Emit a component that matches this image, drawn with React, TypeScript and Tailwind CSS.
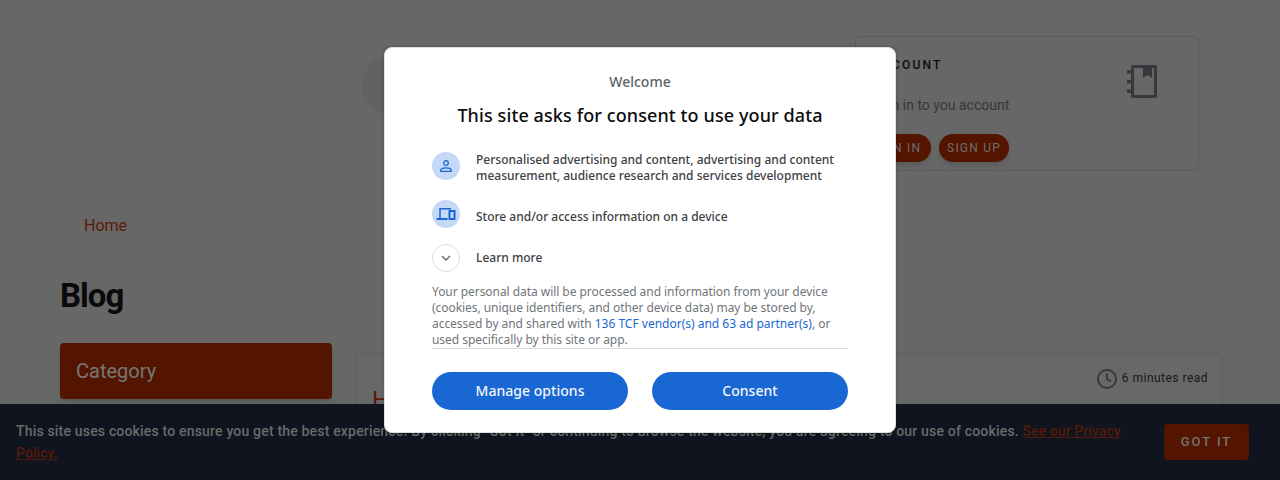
import React from "react";

const roboto = { fontFamily: "Roboto, sans-serif" };

function Notebook() {
  return (
    <svg width="32" height="34" viewBox="0 0 32 34" className="text-[#37383e]">
      <path fill="currentColor" fillRule="evenodd" d="M6 0h22a2 2 0 0 1 2 2v29a2 2 0 0 1-2 2H6a2 2 0 0 1-2-2V2a2 2 0 0 1 2-2zm1 3v27h20V3h-2v10l-4.5-3-4.5 3V3H7z" />
      <rect x="0" y="5" width="5" height="3.5" fill="currentColor" />
      <rect x="0" y="15" width="5" height="3.5" fill="currentColor" />
      <rect x="0" y="24.5" width="5" height="3.5" fill="currentColor" />
    </svg>
  );
}

export default function App() {
  return (
    <div className="relative h-[480px] w-[1280px] overflow-hidden bg-[#676767]" style={roboto}>
      {/* page below the dialog overlay */}
      <div className="flex h-[480px] flex-col">
        <header className="flex h-[196px] shrink-0 justify-end pt-9 pr-[81px]">
          <div className="mr-[433px] mt-[19px] h-[60px] w-[60px] rounded-full bg-[#626262]" />
          <div className="flex h-[135px] w-[344px] rounded border border-[#5c5c5c] pl-[5px] pt-[20px]">
            <div className="w-[266px]">
              <div className="pl-[11px] text-xs font-medium leading-4 tracking-[0.18em] text-[#0d0d0d]">ACCOUNT</div>
              <p className="mt-[22px] pl-[11px] text-sm leading-5 text-[#35363b]">Sign in to you account</p>
              <div className="mt-[19px] flex gap-2">
                <button className="flex h-7 w-[70px] items-center justify-center rounded-full bg-[#531400] text-xs tracking-[0.1em] text-[#6f6f6f] shadow-md">SIGN IN</button>
                <button className="flex h-7 w-[70px] items-center justify-center rounded-full bg-[#531400] text-xs tracking-[0.1em] text-[#6f6f6f] shadow-md">SIGN UP</button>
              </div>
            </div>
            <div className="mt-[8px]"><Notebook /></div>
          </div>
        </header>
        <nav className="h-[36px] shrink-0 pl-[84px] pt-[18px] text-base leading-6 text-[#5a1a08]">Home</nav>
        <h1 className="mt-[44px] shrink-0 pl-[60px] text-[33px] font-bold leading-10 tracking-[-0.03em] text-[#0a0a0a]">Blog</h1>
        <div className="mt-[27px] flex shrink-0 items-start pl-[60px]">
          <aside className="flex h-[56px] w-[272px] items-center rounded-sm bg-[#531400] pl-4 text-xl text-[#787878] shadow-md">Category</aside>
          <article className="ml-[24px] mt-[11px] flex h-[120px] w-[866px] justify-between rounded border border-[#636363] bg-[#686868] pl-[15px] pr-[13px] pt-[13px] shadow-sm">
            <div className="mt-[16px] text-2xl leading-8 text-[#5a1a08]">H</div>
            <div className="flex h-5 items-center gap-1 text-xs tracking-[0.04em] text-[#17181c]">
              <svg className="mt-[2px]" width="22" height="22" viewBox="0 0 22 22" fill="none" stroke="#37383e" strokeWidth="2"><circle cx="11" cy="11" r="9" /><path d="M11 5.5V11l4 2.5" /></svg>
              6 minutes read
            </div>
          </article>
        </div>
      </div>

      {/* cookie banner */}
      <div className="absolute inset-x-0 bottom-0 flex h-[76px] items-start justify-between bg-[#10141f] pl-4 pr-[31px] pt-[16px]">
        <p className="w-[1125px] text-sm font-medium leading-[22px] tracking-[0.013em] text-[#6a6a6a]">
          This site uses cookies to ensure you get the best experience. By clicking &quot;Got It&quot; or continuing to browse the website, you are agreeing to our use of cookies.{" "}
          <span className="tracking-[0.005em] text-[#551a09] underline">See our Privacy Policy.</span>
        </p>
        <button className="mt-[4px] flex h-9 w-[85px] items-center justify-center rounded-sm bg-[#531400] text-[13px] font-medium tracking-[0.15em] text-[#737373]">GOT IT</button>
      </div>

      {/* consent dialog */}
      <div
        className="absolute left-[384px] top-[47px] flex h-[386px] w-[512px] flex-col rounded-lg border border-[#e0e0e0] bg-white px-[47px] pt-[24px] shadow-[0_0_4px_rgba(0,0,0,0.2)]"
        style={{ fontFamily: "'Noto Sans', 'Open Sans', sans-serif" }}
      >
        <div className="text-center text-sm font-medium leading-5 text-[#5f6368]">Welcome</div>
        <h2 className="mt-[11px] text-center text-lg font-medium leading-6 tracking-[0.1px] text-[#0b0c0e]">This site asks for consent to use your data</h2>
        <div className="mt-[25px] flex gap-4">
          <div className="flex h-7 w-7 shrink-0 items-center justify-center rounded-full bg-[#c4d9f6]">
            <svg width="16" height="16" viewBox="0 0 16 16" fill="none" stroke="#1967d2" strokeWidth="1.3"><circle cx="8" cy="5" r="2.3" /><path d="M2.8 13.3h10.4v-1.2c0-1.4-2.6-2.3-5.2-2.3s-5.2.9-5.2 2.3z" /></svg>
          </div>
          <p className="text-xs font-medium leading-4 tracking-[0.02px] text-[#3c4043]">Personalised advertising and content, advertising and content measurement, audience research and services development</p>
        </div>
        <div className="mt-[16px] flex items-start gap-4">
          <div className="flex h-7 w-7 shrink-0 items-center justify-center rounded-full bg-[#c4d9f6]">
            <svg width="20" height="16" viewBox="0 0 20 16" fill="none" stroke="#1967d2" strokeWidth="1.5"><path d="M15 2.7H4v9.3" /><path d="M0.5 13h11" strokeWidth="2" /><rect x="13.5" y="5" width="5" height="8" strokeWidth="2" /></svg>
          </div>
          <p className="pt-[9px] text-xs font-medium leading-4 text-[#3c4043]">Store and/or access information on a device</p>
        </div>
        <div className="mt-[16px] flex items-center gap-4">
          <div className="flex h-7 w-7 shrink-0 items-center justify-center rounded-full border border-[#dadce0]">
            <svg width="10" height="6" viewBox="0 0 10 6" fill="none" stroke="#5f6368" strokeWidth="1.4"><path d="M1 1l4 4 4-4" /></svg>
          </div>
          <p className="text-xs font-medium leading-4 text-[#3c4043]">Learn more</p>
        </div>
        <p className="mt-[12px] border-b border-[#dadce0] text-xs leading-4 tracking-[-0.05px] text-[#70757a]">
          Your personal data will be processed and information from your device (cookies, unique identifiers, and other device data) may be stored by, accessed by and shared with <span className="tracking-normal text-[#1967d2]">136 TCF vendor(s) and 63 ad partner(s)</span>, or used specifically by this site or app.
        </p>
        <div className="mt-[23px] flex gap-6">
          <button className="h-[38px] w-[196px] rounded-full bg-[#1967d2] text-sm font-medium tracking-[0.03px] text-[#f1f5fc]">Manage options</button>
          <button className="h-[38px] w-[196px] rounded-full bg-[#1967d2] text-sm font-medium tracking-[0.03px] text-[#f1f5fc]">Consent</button>
        </div>
      </div>
    </div>
  );
}
